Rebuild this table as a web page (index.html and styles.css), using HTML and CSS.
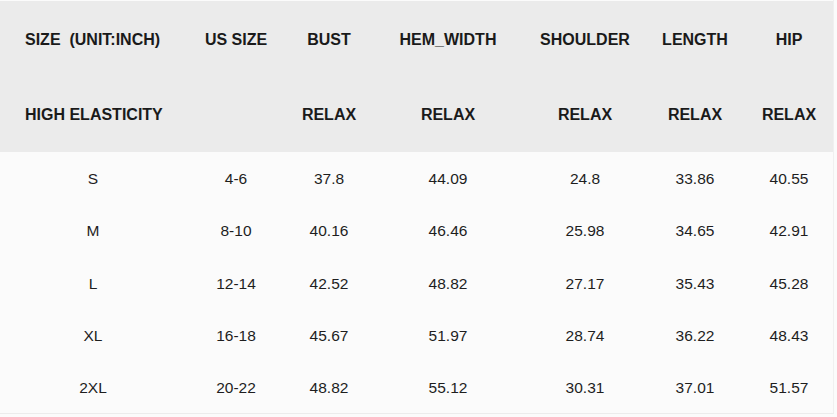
FILE: index.html
```html
<!DOCTYPE html>
<html>
<head>
<meta charset="utf-8">
<link rel="stylesheet" href="styles.css">
</head>
<body>
<div class="chart">
  <div class="head">
    <div class="row hrow">
      <div class="cell first">SIZE&nbsp;&nbsp;(UNIT:INCH)</div>
      <div class="cell">US SIZE</div>
      <div class="cell">BUST</div>
      <div class="cell">HEM_WIDTH</div>
      <div class="cell">SHOULDER</div>
      <div class="cell">LENGTH</div>
      <div class="cell">HIP</div>
    </div>
    <div class="row hrow">
      <div class="cell first">HIGH ELASTICITY</div>
      <div class="cell"></div>
      <div class="cell">RELAX</div>
      <div class="cell">RELAX</div>
      <div class="cell">RELAX</div>
      <div class="cell">RELAX</div>
      <div class="cell">RELAX</div>
    </div>
  </div>
  <div class="body">
    <div class="row drow"><div class="cell">S</div><div class="cell">4-6</div><div class="cell">37.8</div><div class="cell">44.09</div><div class="cell">24.8</div><div class="cell">33.86</div><div class="cell">40.55</div></div>
    <div class="row drow"><div class="cell">M</div><div class="cell">8-10</div><div class="cell">40.16</div><div class="cell">46.46</div><div class="cell">25.98</div><div class="cell">34.65</div><div class="cell">42.91</div></div>
    <div class="row drow"><div class="cell">L</div><div class="cell">12-14</div><div class="cell">42.52</div><div class="cell">48.82</div><div class="cell">27.17</div><div class="cell">35.43</div><div class="cell">45.28</div></div>
    <div class="row drow"><div class="cell">XL</div><div class="cell">16-18</div><div class="cell">45.67</div><div class="cell">51.97</div><div class="cell">28.74</div><div class="cell">36.22</div><div class="cell">48.43</div></div>
    <div class="row drow"><div class="cell">2XL</div><div class="cell">20-22</div><div class="cell">48.82</div><div class="cell">55.12</div><div class="cell">30.31</div><div class="cell">37.01</div><div class="cell">51.57</div></div>
  </div>
</div>
</body>
</html>
```
FILE: styles.css
```css
html, body {
  margin: 0;
  padding: 0;
  background: #fbfbfb;
}
body {
  font-family: "Liberation Sans", Arial, sans-serif;
  color: #1a1a1a;
  width: 837px;
  height: 417px;
  overflow: hidden;
}
.chart {
  padding-top: 1px;
  width: 834px;
  border-right: 1px solid #f0f0f0;
  border-bottom: 1px solid #ececec;
  height: 414px;
  box-sizing: border-box;
}
.head {
  background: #ebebeb;
  height: 150px;
  padding-top: 1px;
}
.row {
  display: grid;
  grid-template-columns: 186px 100px 86px 152px 122px 98px 90px;
  align-items: center;
}
.hrow {
  height: 75px;
  font-weight: bold;
  font-size: 16px;
}
.cell {
  text-align: center;
  white-space: nowrap;
}
.hrow .first {
  text-align: left;
  padding-left: 25px;
}
.body {
  padding-top: 1px;
}
.drow {
  height: 52.3px;
  font-size: 15.5px;
  color: #1e1e1e;
}
```
